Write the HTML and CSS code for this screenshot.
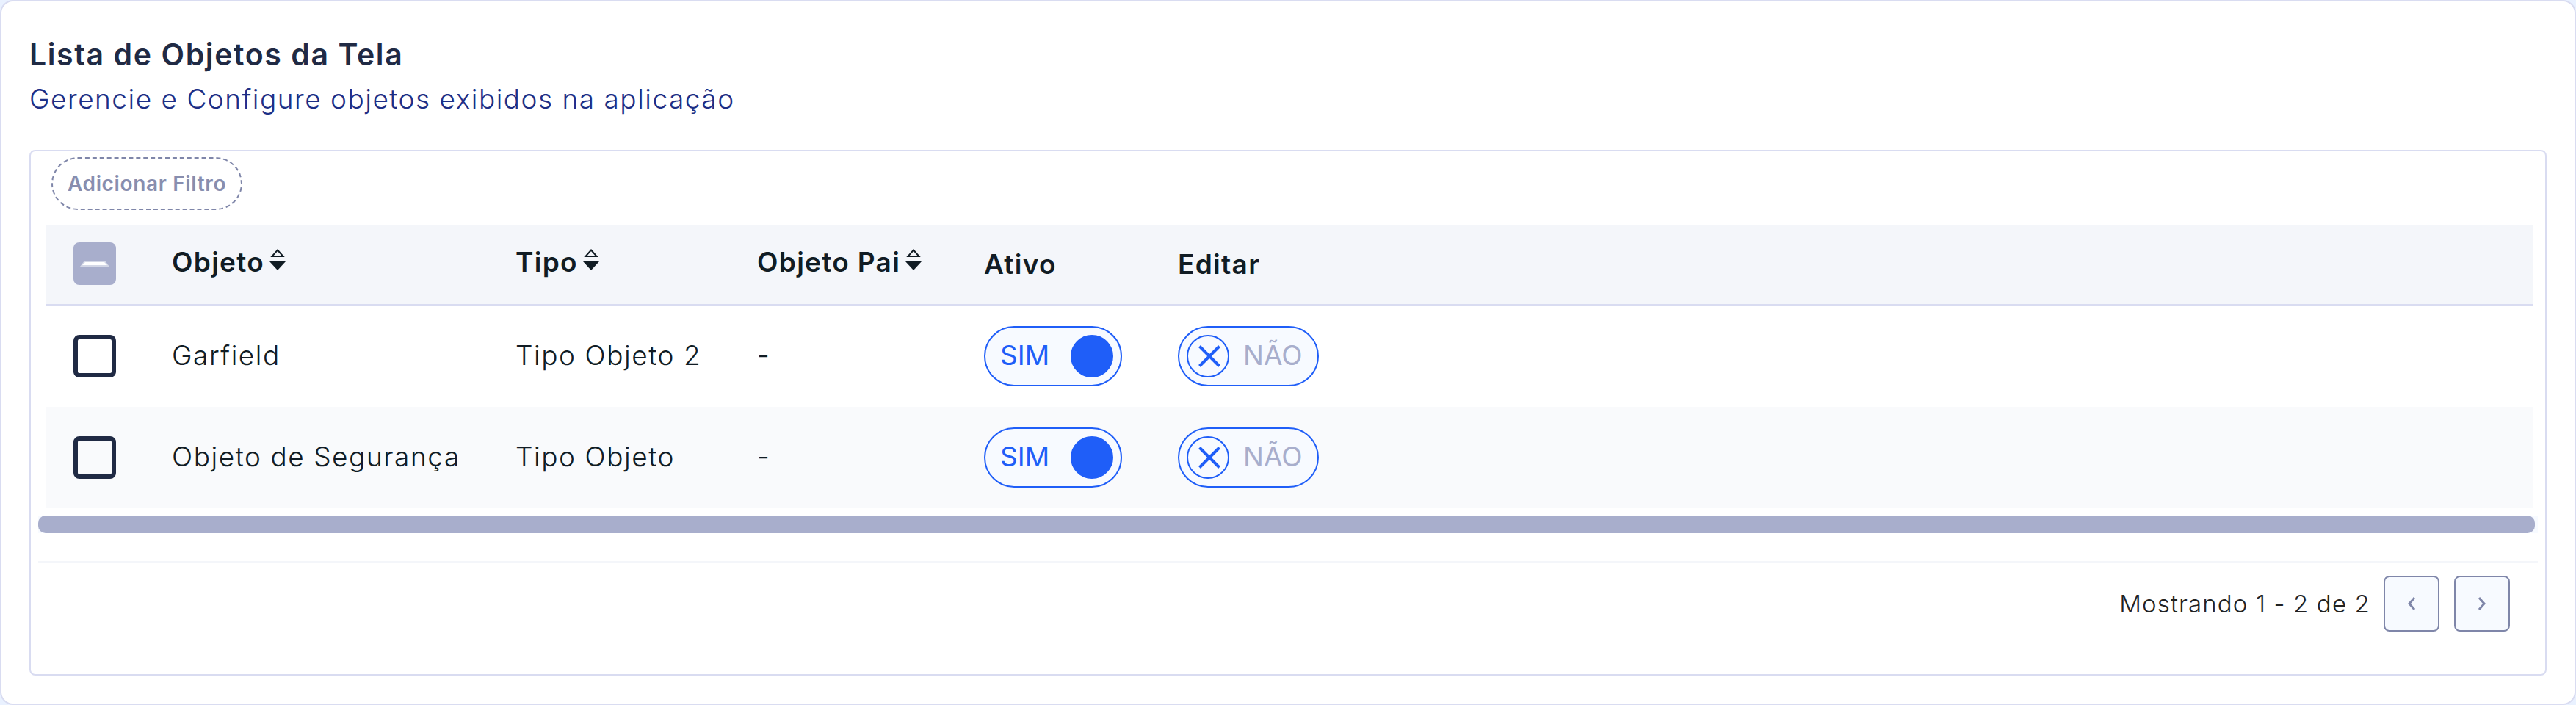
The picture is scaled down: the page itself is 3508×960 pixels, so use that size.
FILE: index.html
```
<!DOCTYPE html>
<html lang="pt-br">
<head>
    <meta charset="UTF-8">
    <title>Lista de Objetos da Tela</title>
    <link rel="stylesheet" href="styles.css">
</head>
<body>

<div class="card">
    <h1 class="title">Lista de Objetos da Tela</h1>
    <p class="subtitle">Gerencie e Configure objetos exibidos na aplicação</p>

    <div class="panel">
        <button class="add-filter">Adicionar Filtro</button>

        <table class="table">
            <colgroup>
                <col class="col-check">
                <col class="col-objeto">
                <col class="col-tipo">
                <col class="col-pai">
                <col class="col-ativo">
                <col>
            </colgroup>
            <thead>
                <tr>
                    <th>
                        <div class="checkbox partial">
                            <svg width="40" height="8" viewBox="0 0 40 8"><path d="M6 0H34L40 8H0Z" fill="#d3d7e6"/><path d="M7 2H33L37 6H3Z" fill="#fff"/></svg>
                        </div>
                    </th>
                    <th><div class="sort"><span>Objeto</span><svg width="22" height="29" viewBox="0 0 22 29"><path d="M11 1.5L18.5 10H3.5Z" fill="none" stroke="#111c24" stroke-width="2"/><path d="M0 17H22L11 29Z" fill="#111c24"/></svg></div></th>
                    <th><div class="sort"><span>Tipo</span><svg width="22" height="29" viewBox="0 0 22 29"><path d="M11 1.5L18.5 10H3.5Z" fill="none" stroke="#111c24" stroke-width="2"/><path d="M0 17H22L11 29Z" fill="#111c24"/></svg></div></th>
                    <th><div class="sort"><span>Objeto Pai</span><svg width="22" height="29" viewBox="0 0 22 29"><path d="M11 1.5L18.5 10H3.5Z" fill="none" stroke="#111c24" stroke-width="2"/><path d="M0 17H22L11 29Z" fill="#111c24"/></svg></div></th>
                    <th>Ativo</th>
                    <th>Editar</th>
                </tr>
            </thead>
            <tbody>
                <tr>
                    <td><div class="checkbox"></div></td>
                    <td class="text">Garfield</td>
                    <td class="text">Tipo Objeto 2</td>
                    <td class="text">-</td>
                    <td><div class="toggle on"><span>SIM</span><i class="knob"></i></div></td>
                    <td><div class="toggle off"><i class="knob"><svg width="30" height="30" viewBox="0 0 30 30"><path d="M1.5 1.5L28.5 28.5M28.5 1.5L1.5 28.5" stroke="#1f5ef8" stroke-width="4"/></svg></i><span>NÃO</span></div></td>
                </tr>
                <tr>
                    <td><div class="checkbox"></div></td>
                    <td class="text">Objeto de Segurança</td>
                    <td class="text">Tipo Objeto</td>
                    <td class="text">-</td>
                    <td><div class="toggle on"><span>SIM</span><i class="knob"></i></div></td>
                    <td><div class="toggle off"><i class="knob"><svg width="30" height="30" viewBox="0 0 30 30"><path d="M1.5 1.5L28.5 28.5M28.5 1.5L1.5 28.5" stroke="#1f5ef8" stroke-width="4"/></svg></i><span>NÃO</span></div></td>
                </tr>
            </tbody>
        </table>

        <div class="scrollbar"><div class="thumb"></div></div>

        <div class="pagination">
            <span>Mostrando 1 - 2 de 2</span>
            <button class="page-btn"><svg width="12" height="20" viewBox="0 0 12 20"><path d="M10 2L3 10L10 18" fill="none" stroke="#7f86a9" stroke-width="3"/></svg></button>
            <button class="page-btn"><svg width="12" height="20" viewBox="0 0 12 20"><path d="M2 2L9 10L2 18" fill="none" stroke="#7f86a9" stroke-width="3"/></svg></button>
        </div>
    </div>
</div>

</body>
</html>
```
FILE: styles.css
```
* {
    box-sizing: border-box;
}
body {
    margin: 0;
    background-color: #e9f1ff;
    font-family: Inter, "Liberation Sans", sans-serif;
    color: #111c24;
}
.card {
    height: 960px;
    padding: 38px;
    background-color: #fff;
    border: 2px solid #d9dcf1;
    border-radius: 18px;
}
.title {
    margin: 0;
    height: 68px;
    line-height: 68px;
    font-size: 41px;
    font-weight: 600;
    letter-spacing: 1.6px;
    color: #202a44;
}
.subtitle {
    margin: 0;
    height: 56px;
    line-height: 53px;
    font-size: 37px;
    font-weight: 300;
    letter-spacing: 1.5px;
    color: #1d2f86;
}
.panel {
    display: flex;
    flex-direction: column;
    align-items: flex-start;
    margin-top: 40px;
    height: 716px;
    padding: 8px 10px;
    border: 2px solid #d9dcf1;
    border-radius: 8px;
}
.add-filter {
    margin-left: 18px;
    width: 260px;
    height: 72px;
    padding: 0;
    border: 2px dashed #7f86a9;
    border-radius: 36px;
    background: none;
    font: 600 28px Inter, sans-serif;
    letter-spacing: 0.65px;
    color: #888eaf;
}
.table {
    width: 3388px;
    margin: 20px 0 0 10px;
    border-collapse: separate;
    border-spacing: 0;
    table-layout: fixed;
    white-space: nowrap;
    font-size: 37px;
}
.col-check { width: 134px; }
.col-objeto { width: 468px; }
.col-tipo { width: 329px; }
.col-pai { width: 309px; }
.col-ativo { width: 264px; }
.table th,
.table td {
    padding: 0 0 0 38px;
    text-align: left;
    vertical-align: middle;
}
.table th {
    height: 110px;
    padding-bottom: 2px;
    background-color: #f4f6fa;
    border-bottom: 2px solid #d9dcf1;
    font-weight: 600;
    letter-spacing: 1.3px;
}
.table td {
    height: 138px;
    font-weight: 300;
}
.table .text {
    padding-bottom: 4px;
    letter-spacing: 1.55px;
}
.table tbody tr:nth-child(even) td {
    background-color: #f9fafc;
}
.sort {
    display: flex;
    align-items: center;
    gap: 7px;
    padding-bottom: 5px;
}
.sort svg {
    margin-bottom: 6px;
}
.checkbox {
    display: flex;
    align-items: center;
    justify-content: center;
    width: 58px;
    height: 58px;
    border: 6px solid #202a44;
    border-radius: 8px;
}
.checkbox.partial {
    background-color: #a8aecc;
    border: 0;
}
.toggle {
    display: flex;
    align-items: center;
    height: 82px;
    border: 2px solid #1f5ef8;
    border-radius: 41px;
    background-color: #f7faff;
    font-weight: 400;
}
.toggle span {
    padding-bottom: 4px;
}
.toggle.on {
    justify-content: space-between;
    width: 188px;
    padding: 0 10px 0 20px;
    color: #1f5ef8;
}
.toggle.off {
    gap: 19px;
    width: 192px;
    padding-left: 10px;
    color: #a8aecc;
}
.knob {
    display: flex;
    align-items: center;
    justify-content: center;
    width: 58px;
    height: 58px;
    border: 2px solid #1f5ef8;
    border-radius: 50%;
}
.toggle.off .knob {
    padding-left: 3px;
}
.toggle.on .knob {
    background-color: #1f5ef8;
}
.scrollbar {
    width: 3404px;
    height: 24px;
    margin-top: 10px;
    background-color: #f7faff;
}
.thumb {
    width: 3400px;
    height: 24px;
    border-radius: 10px;
    background-color: #a8aecc;
}
.pagination {
    display: flex;
    align-items: center;
    justify-content: flex-end;
    gap: 20px;
    width: 3404px;
    height: 114px;
    margin-top: 38px;
    padding-right: 38px;
    border-top: 2px solid #f4f6fa;
    font-size: 33px;
    font-weight: 300;
    letter-spacing: 1.15px;
    color: #222;
}
.pagination span {
    margin-right: -2px;
}
.page-btn {
    display: flex;
    align-items: center;
    justify-content: center;
    width: 76px;
    height: 76px;
    border: 2px solid #7f86a9;
    border-radius: 8px;
    background-color: #f7faff;
}
```
